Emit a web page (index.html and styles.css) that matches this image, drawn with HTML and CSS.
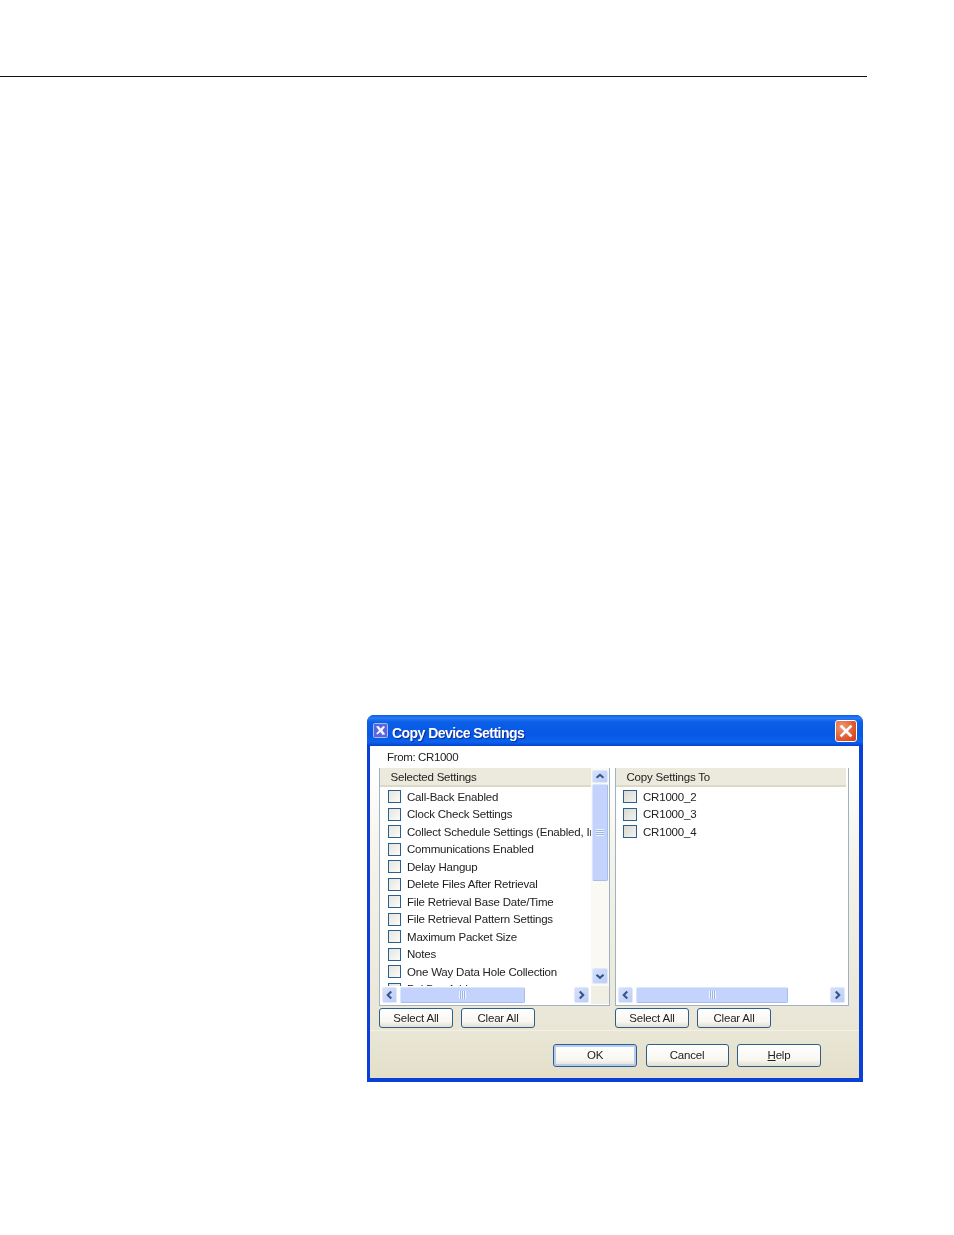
FILE: index.html
```html
<!DOCTYPE html>
<html lang="en">
<head>
<meta charset="utf-8">
<title>Copy Device Settings</title>
<link rel="stylesheet" href="styles.css">
</head>
<body>
<hr class="rule">
<section class="dialog">
  <header class="titlebar">
    <svg class="app-icon" viewBox="0 0 15 15"><rect x=".5" y=".5" width="14" height="14" rx="1" fill="#5a66dc" stroke="#a9b8f2"/><path d="M3 3.500l2.500-.5 2 2.600L10.500 3l1.500 1-2.600 3.300 2.800 4-2.700.7-2-3-3 2.600-1.300-1.100L6 7.500z" fill="#f2f4ff"/></svg>
    <h1 class="title">Copy Device Settings</h1>
    <button class="close" type="button"><svg viewBox="0 0 20 20"><path d="M5.500 5.500l9 9M14.500 5.500l-9 9" stroke="#fff" stroke-width="2.600" stroke-linecap="square"/></svg></button>
  </header>
  <div class="client">
    <p class="from">From: CR1000</p>
    <div class="panes">
      <div class="pane pane-left">
        <div class="panel">
          <div class="view">
            <div class="list-area">
              <div class="list-head">Selected Settings</div>
              <ul class="list">
                <li><i class="check"></i>Call-Back Enabled</li>
                <li><i class="check"></i>Clock Check Settings</li>
                <li><i class="check"></i>Collect Schedule Settings (Enabled, Interval)</li>
                <li><i class="check"></i>Communications Enabled</li>
                <li><i class="check"></i>Delay Hangup</li>
                <li><i class="check"></i>Delete Files After Retrieval</li>
                <li><i class="check"></i>File Retrieval Base Date/Time</li>
                <li><i class="check"></i>File Retrieval Pattern Settings</li>
                <li><i class="check"></i>Maximum Packet Size</li>
                <li><i class="check"></i>Notes</li>
                <li><i class="check"></i>One Way Data Hole Collection</li>
                <li><i class="check"></i>PakBus Address</li>
              </ul>
            </div>
            <div class="vscroll">
              <span class="sbtn"><svg viewBox="0 0 16 13"><path d="M4 8l4-3.500L12 8" class="chev"/></svg></span>
              <span class="vthumb"><b class="grip-h"></b></span>
              <span class="sbtn sbtn-end"><svg viewBox="0 0 16 16"><path d="M4 6.500l4 3.500 4-3.500" class="chev"/></svg></span>
            </div>
          </div>
          <div class="hrow">
            <div class="hscroll">
              <span class="sbtn sbtn-h"><svg viewBox="0 0 14 16"><path d="M9 4L5 8l4 4" class="chev"/></svg></span>
              <span class="hthumb thumb-left"><b class="grip-v"></b></span>
              <span class="sbtn sbtn-h sbtn-end"><svg viewBox="0 0 14 16"><path d="M5 4l4 4-4 4" class="chev"/></svg></span>
            </div>
            <div class="corner"></div>
          </div>
        </div>
        <div class="actions">
          <button class="btn btn-sm" type="button">Select All</button>
          <button class="btn btn-sm" type="button">Clear All</button>
        </div>
      </div>
      <div class="pane pane-right">
        <div class="panel">
          <div class="view">
            <div class="list-area">
              <div class="list-head">Copy Settings To</div>
              <ul class="list">
                <li><i class="check check-soft"></i>CR1000_2</li>
                <li><i class="check check-soft"></i>CR1000_3</li>
                <li><i class="check check-soft"></i>CR1000_4</li>
              </ul>
            </div>
          </div>
          <div class="hrow">
            <div class="hscroll">
              <span class="sbtn sbtn-h"><svg viewBox="0 0 14 16"><path d="M9 4L5 8l4 4" class="chev"/></svg></span>
              <span class="hthumb thumb-right"><b class="grip-v"></b></span>
              <span class="sbtn sbtn-h sbtn-end"><svg viewBox="0 0 14 16"><path d="M5 4l4 4-4 4" class="chev"/></svg></span>
            </div>
          </div>
        </div>
        <div class="actions">
          <button class="btn btn-sm" type="button">Select All</button>
          <button class="btn btn-sm" type="button">Clear All</button>
        </div>
      </div>
    </div>
    <footer class="footer">
      <button class="btn btn-lg btn-default" type="button">OK</button>
      <button class="btn btn-lg btn-cancel" type="button">Cancel</button>
      <button class="btn btn-lg" type="button"><u>H</u>elp</button>
    </footer>
  </div>
</section>
</body>
</html>
```

FILE: styles.css
```css
* { box-sizing: border-box; }
html, body { margin: 0; background: #fff; }
body { height: 1235px; overflow: hidden; font-family: "Liberation Sans", Arial, sans-serif; }

.rule { width: 867px; height: 1px; margin: 76px 0 0; border: 0; background: #111; }

.dialog {
  width: 496px; height: 367px; margin: 638px 0 0 367px;
  display: flex; flex-direction: column;
  background: #0a3fd8; border-radius: 7px 7px 0 0;
  padding: 0 4px 4px 3px;
  filter: blur(.3px);
}
.titlebar {
  height: 31px; flex: none; margin: 0 -4px 0 -3px; padding: 0 6px 0 6px;
  display: flex; align-items: center;
  border-radius: 7px 7px 0 0;
  background: linear-gradient(#0f5ae6 0, #2a7cf2 3px, #0b5fe8 7px, #0758e4 20px, #0a63ee 27px, #0640cc 31px);
}
.app-icon { width: 15px; height: 15px; flex: none; }
.title {
  margin: 4px 0 0 4px; flex: 1;
  font: bold 14px/1 "Liberation Sans", Arial, sans-serif; color: #fff;
  letter-spacing: -.55px; text-shadow: 1px 1px 1px #0a2a9a;
}
.close {
  width: 22px; height: 22px; padding: 0; flex: none; border: 1px solid #fff; border-radius: 3px;
  background: radial-gradient(circle at 30% 30%, #ef9a78, #e0592f 60%, #c83c18);
}
.close svg { display: block; width: 20px; height: 20px; }

.client {
  flex: 1; display: flex; flex-direction: column; min-height: 0;
  background: linear-gradient(#fff 0, #fff 25px, #f6f4ec 100px, #e9e6d6 285px);
}
.from { margin: 0; height: 22px; padding: 3px 0 0 17px; font-size: 11.5px; letter-spacing: -.35px; line-height: 16px; color: #222; }

.panes { display: flex; flex: none; height: 260px; padding-left: 9px; }
.pane { display: flex; flex-direction: column; }
.pane-left { width: 236px; }
.pane-right { width: 234px; }
.panel {
  height: 238px; flex: none; display: flex; flex-direction: column;
  border: 1px solid #9db2c6; border-top: 0; background: #fff;
}
.pane-left .panel { width: 231px; }
.pane-right .panel { width: 234px; }
.view { height: 218px; flex: none; display: flex; min-height: 0; }
.list-area { flex: 1; min-width: 0; overflow: hidden; }
.list-head {
  height: 19px; padding: 1px 0 0 10.500px; background: #ece9dd; border-bottom: 2px solid #dcd9c8;
  font-size: 11.5px; letter-spacing: -.2px; line-height: 16px; color: #222; white-space: nowrap;
}
.pane-right .list-head { margin-right: 2px; }
.list { list-style: none; margin: 0; padding: 1px 0 0; }
.list li {
  height: 17.5px; display: flex; align-items: center; padding-left: 8px;
  font-size: 11.5px; letter-spacing: -.2px; color: #222; white-space: nowrap;
}
.pane-right .list li { padding-left: 7px; }
.check { width: 13px; height: 13px; flex: none; margin: 0 6px 0 0; border: 1px solid #2c5f8e; background: linear-gradient(135deg, #e6e6de, #fbfbf8); }
.check-soft { width: 14px; background: linear-gradient(135deg, #d9d9d2, #f4f4ef); }

.vscroll { width: 18px; flex: none; display: flex; flex-direction: column; padding: 2px 1px 2px 1px; background: #faf9f4; }
.sbtn {
  width: 16px; height: 13px; flex: none; display: block; border-radius: 2px;
  background: linear-gradient(135deg, #d6e1fb, #bccdf6); border: 1px solid #e0e8fb;
}
.sbtn svg { display: block; width: 100%; height: 100%; }
.sbtn-end { margin-top: auto; height: 16px; }
.chev { fill: none; stroke: #35558a; stroke-width: 2.4; }
.vthumb {
  width: 16px; height: 97px; margin-top: 1px; display: flex; align-items: center; justify-content: center;
  border-radius: 2px; background: #c3d3fb; border: 1px solid #dbe5fb; border-right-color: #a9bdea; border-bottom-color: #a9bdea;
}
.grip-h { width: 8px; height: 7px; background: repeating-linear-gradient(#eef3ff 0 1px, #9db3e6 1px 2px); }

.hrow { height: 18px; flex: none; display: flex; }
.hscroll { flex: 1; display: flex; padding: 1px 2px 1px 2px; background: #fff; }
.corner { width: 18px; flex: none; background: #f1efe4; }
.sbtn-h { width: 15px; height: 16px; margin: 0; }
.sbtn-h.sbtn-end { margin-left: auto; height: 16px; }
.hthumb {
  height: 16px; margin-left: 3px; display: flex; align-items: center; justify-content: center;
  border-radius: 2px; background: #c3d3fb; border: 1px solid #dbe5fb; border-right-color: #a9bdea; border-bottom-color: #a9bdea;
}
.thumb-left { width: 125px; }
.thumb-right { width: 152px; }
.pane-right .hscroll { padding-right: 3px; }
.grip-v { width: 7px; height: 8px; background: repeating-linear-gradient(90deg, #eef3ff 0 1px, #9db3e6 1px 2px); }

.actions { display: flex; gap: 8px; padding-top: 2px; }
.btn {
  padding: 1px 0 0; border: 1px solid #2f5f86; border-radius: 3px; color: #222;
  font: 11.5px/1 "Liberation Sans", Arial, sans-serif; letter-spacing: -.2px;
  background: linear-gradient(#fff, #f8f7f1 70%, #e2dfd2);
}
.btn-sm { width: 74px; height: 20px; }
.btn-lg { width: 84px; height: 23px; }
.btn-cancel { width: 83px; }
.btn-default { box-shadow: inset 0 0 0 2px #b6ccf0; }

.footer {
  flex: 1; display: flex; gap: 8.5px; padding: 13px 0 0 183px;
  margin-top: 2px; border-top: 1px solid #f4f2e6;
  background: linear-gradient(#e9e6d6, #e3dfc9);
}
```
